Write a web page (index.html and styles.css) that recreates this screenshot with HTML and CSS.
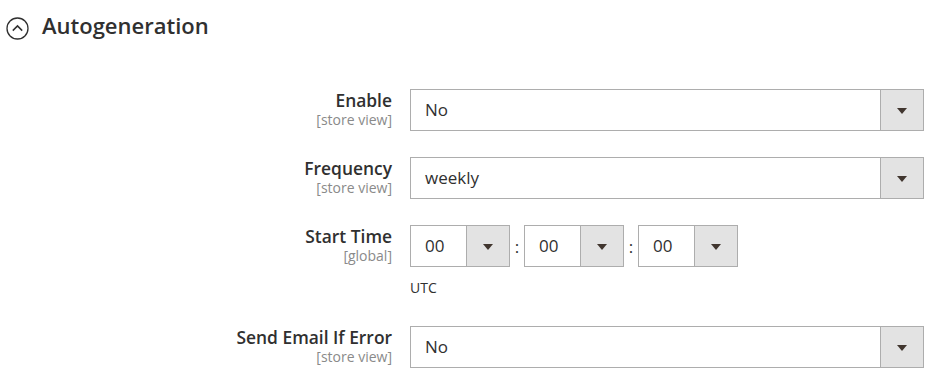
FILE: index.html
```html
<!doctype html>
<html lang="en">
    <head>
        <meta charset="UTF-8" />
        <title>Autogeneration</title>
        <link rel="stylesheet" href="styles.css">
    </head>
    <body>
        <div class="section-title">
            <svg class="toggle-icon" width="23" height="23" viewBox="0 0 23 23">
                <circle cx="11.5" cy="11.5" r="10.5" fill="none" stroke="#303030" stroke-width="1.3" />
                <path d="M6.8 13.6 L11.5 8.9 L16.2 13.6" fill="none" stroke="#303030" stroke-width="1.5" />
            </svg>
            <span>Autogeneration</span>
        </div>

        <div class="fieldset">
            <div class="field">
                <div class="label">
                    <span class="label-text">Enable</span>
                    <span class="scope">[store view]</span>
                </div>
                <div class="control">
                    <div class="select">
                        <span class="value">No</span>
                        <span class="arrow-btn"><i class="arrow"></i></span>
                    </div>
                </div>
            </div>

            <div class="field">
                <div class="label">
                    <span class="label-text">Frequency</span>
                    <span class="scope">[store view]</span>
                </div>
                <div class="control">
                    <div class="select">
                        <span class="value">weekly</span>
                        <span class="arrow-btn"><i class="arrow"></i></span>
                    </div>
                </div>
            </div>

            <div class="field">
                <div class="label">
                    <span class="label-text">Start Time</span>
                    <span class="scope">[global]</span>
                </div>
                <div class="control">
                    <div class="time">
                        <div class="select small">
                            <span class="value">00</span>
                            <span class="arrow-btn"><i class="arrow"></i></span>
                        </div>
                        <span class="colon">:</span>
                        <div class="select small">
                            <span class="value">00</span>
                            <span class="arrow-btn"><i class="arrow"></i></span>
                        </div>
                        <span class="colon">:</span>
                        <div class="select small">
                            <span class="value">00</span>
                            <span class="arrow-btn"><i class="arrow"></i></span>
                        </div>
                    </div>
                    <div class="note">UTC</div>
                </div>
            </div>

            <div class="field">
                <div class="label">
                    <span class="label-text">Send Email If Error</span>
                    <span class="scope">[store view]</span>
                </div>
                <div class="control">
                    <div class="select">
                        <span class="value">No</span>
                        <span class="arrow-btn"><i class="arrow"></i></span>
                    </div>
                </div>
            </div>
        </div>
    </body>
</html>
```

FILE: styles.css
```css
body {
    margin: 0;
    font-family: "Open Sans", "Liberation Sans", sans-serif;
    color: #303030;
    background-color: #fff;
}
/* Titolo della sezione */
.section-title {
    display: flex;
    align-items: center;
    padding: 11px 0 0 6px;
    height: 28px;
    font-size: 22px;
    font-weight: 600;
    color: #303030;
}
.toggle-icon {
    margin-right: 13px;
    margin-top: 6px;
}
.fieldset {
    padding-top: 50px;
}
.field {
    display: flex;
    margin-bottom: 26px;
}
.label {
    width: 392px;
    box-sizing: border-box;
    text-align: right;
}
.label-text {
    display: block;
    font-size: 17.4px;
    font-weight: 600;
    line-height: 22px;
}
.scope {
    display: block;
    font-size: 14px;
    line-height: 18px;
    color: #8a8a8a;
}
.control {
    margin-left: 18px;
}
/* Select finta */
.select {
    display: flex;
    width: 514px;
    height: 42px;
    box-sizing: border-box;
    border: 1px solid #adadad;
    background-color: #fff;
}
.select .value {
    flex: 1;
    padding-left: 14px;
    font-size: 17px;
    line-height: 40px;
}
.arrow-btn {
    display: flex;
    align-items: center;
    justify-content: center;
    width: 42px;
    border-left: 1px solid #adadad;
    background-color: #e3e3e3;
}
.arrow {
    width: 0;
    height: 0;
    border-left: 5px solid transparent;
    border-right: 5px solid transparent;
    border-top: 6px solid #41362f;
    margin-top: 1px;
}
.time {
    display: flex;
    align-items: center;
}
.select.small {
    width: 100px;
}
.colon {
    width: 14px;
    text-align: center;
    font-size: 17px;
}
.note {
    margin-top: 11px;
    padding-bottom: 2px;
    font-size: 14px;
    line-height: 20px;
}
```
